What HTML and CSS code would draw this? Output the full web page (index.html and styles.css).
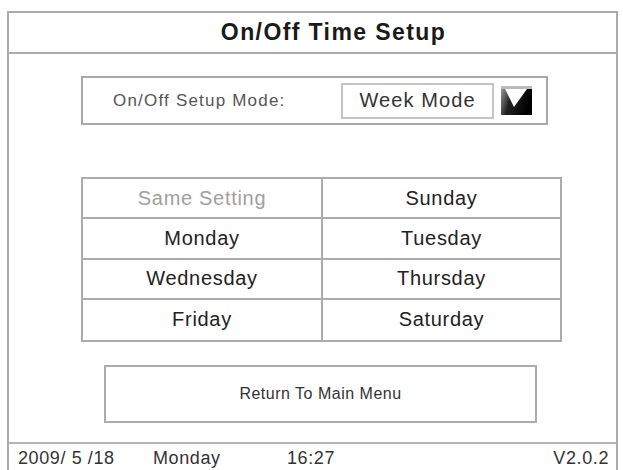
FILE: index.html
```html
<!DOCTYPE html>
<html>
<head>
<meta charset="utf-8">
<link rel="stylesheet" href="styles.css">
</head>
<body>
<div class="frame">
  <div class="header">On/Off Time Setup</div>
  <div class="content">
    <div class="mode-box">
      <span class="mode-label">On/Off Setup Mode:</span>
      <span class="mode-value">Week Mode</span>
      <svg class="drop" width="31" height="29" viewBox="0 0 31 29">
        <defs>
          <linearGradient id="g" x1="0" y1="0" x2="1" y2="0.3">
            <stop offset="0" stop-color="#a0a0a0"/>
            <stop offset="0.4" stop-color="#222"/>
            <stop offset="1" stop-color="#000"/>
          </linearGradient>
        </defs>
        <rect x="0" y="0" width="31" height="29" fill="url(#g)"/>
        <rect x="0" y="0" width="31" height="3" fill="#bbb"/>
        <polygon points="4,3 26,3 13,21" fill="#fff"/>
      </svg>
    </div>
    <div class="days">
      <div class="cell muted">Same Setting</div>
      <div class="cell">Sunday</div>
      <div class="cell">Monday</div>
      <div class="cell">Tuesday</div>
      <div class="cell">Wednesday</div>
      <div class="cell">Thursday</div>
      <div class="cell">Friday</div>
      <div class="cell">Saturday</div>
    </div>
    <div class="return-btn">Return To Main Menu</div>
  </div>
  <div class="footer">
    <span class="f-date">2009/ 5 /18</span>
    <span class="f-day">Monday</span>
    <span class="f-time">16:27</span>
    <span class="f-ver">V2.0.2</span>
  </div>
</div>
</body>
</html>
```

FILE: styles.css
```css
html, body {
  margin: 0;
  padding: 0;
  background: #fff;
}
body {
  font-family: "Liberation Sans", Arial, sans-serif;
  color: #222;
  overflow: hidden;
}
.frame {
  margin: 11px 0 0 7px;
  width: 611px;
  height: 470px;
  box-sizing: border-box;
  border: 2px solid #acacac;
  border-bottom: none;
  display: flex;
  flex-direction: column;
}
.header {
  height: 39px;
  border-bottom: 2px solid #acacac;
  display: flex;
  align-items: center;
  justify-content: center;
  padding-left: 42px;
  font-size: 23px;
  letter-spacing: 1.4px;
  font-weight: bold;
  color: #1a1a1a;
}
.content {
  display: flex;
  flex-direction: column;
  height: 390px;
  box-sizing: border-box;
  border-bottom: 2px solid #b4b4b4;
}
.mode-box {
  margin: 22px 0 0 72px;
  width: 467px;
  height: 49px;
  box-sizing: border-box;
  border: 2px solid #a8a8a8;
  display: flex;
  align-items: center;
}
.mode-label {
  margin-left: 30px;
  width: 228px;
  font-size: 17px;
  letter-spacing: 1.2px;
  color: #555;
}
.mode-value {
  width: 153px;
  height: 36px;
  box-sizing: border-box;
  border: 2px solid #c4c4c4;
  display: flex;
  align-items: center;
  justify-content: center;
  font-size: 20px;
  letter-spacing: 1.1px;
  color: #333;
}
.drop {
  margin-left: 7px;
  display: block;
}
.days {
  margin: 52px 0 0 72px;
  width: 481px;
  height: 165px;
  box-sizing: border-box;
  border: 2px solid #acacac;
  display: grid;
  grid-template-columns: 240px 1fr;
  grid-template-rows: repeat(4, 1fr);
}
.cell {
  display: flex;
  align-items: center;
  justify-content: center;
  font-size: 20px;
  letter-spacing: 0.7px;
  color: #222;
  border-bottom: 2px solid #acacac;
}
.cell:nth-child(odd) {
  border-right: 2px solid #acacac;
}
.cell:nth-last-child(-n+2) {
  border-bottom: none;
}
.cell.muted {
  color: #a0a0a0;
}
.return-btn {
  margin: 23px 0 0 95px;
  width: 433px;
  height: 58px;
  box-sizing: border-box;
  border: 2px solid #acacac;
  display: flex;
  align-items: center;
  justify-content: center;
  font-size: 16px;
  letter-spacing: 0.5px;
  color: #333;
}
.footer {
  display: flex;
  align-items: center;
  height: 24px;
  font-size: 18px;
  letter-spacing: 0.6px;
  color: #333;
  padding-top: 2px;
}
.f-date { margin-left: 9px; width: 135px; }
.f-day { width: 134px; }
.f-time { flex: 1; }
.f-ver { margin-right: 7px; }
```
